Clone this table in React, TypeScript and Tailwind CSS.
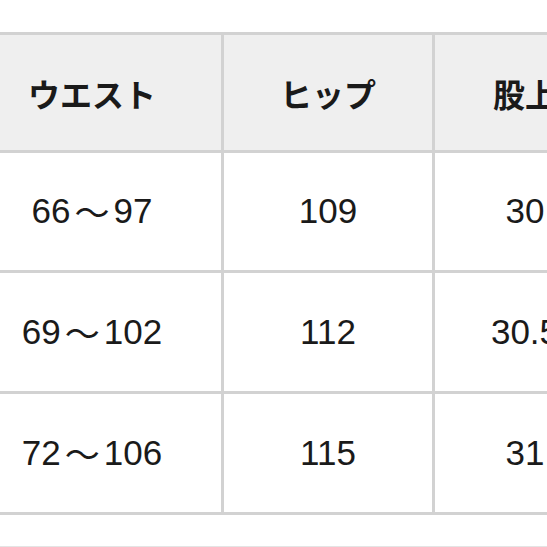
const headers = ["ウエスト", "ヒップ", "股上"];

const rows = [
  ["66～97", "109", "30"],
  ["69～102", "112", "30.5"],
  ["72～106", "115", "31"],
];

// column widths incl. the 3px right border
const colClass = ["w-[261px] shrink-0", "w-[211px] shrink-0", "w-[183px] shrink-0"];

function Cell({ text }: { text: string }) {
  const parts = text.split("～");
  if (parts.length < 2) return <>{text}</>;
  return (
    <>
      {parts[0]}
      <span className="mx-[4px]" style={{ fontFamily: '"Noto Sans CJK JP", sans-serif' }}>
        ～
      </span>
      {parts[1]}
    </>
  );
}

export default function App() {
  return (
    <div
      className="w-[547px] h-[547px] overflow-hidden bg-white pt-[32px] text-[#1a1a1a]"
      style={{ fontFamily: '"Liberation Sans", "Noto Sans CJK JP", sans-serif' }}
    >
      <div className="ml-[-37px] flex flex-col border-t-[3px] border-[#d2d2d2] w-max">
        {/* header */}
        <div className="flex h-[118px] bg-[#efefef] border-b-[3px] border-[#d2d2d2]">
          {headers.map((h, i) => (
            <div
              key={h}
              className={`${colClass[i]} flex items-center justify-center border-r-[3px] border-[#d2d2d2] text-[32px] font-bold`}
              style={{ fontFamily: '"Noto Sans CJK JP", sans-serif' }}
            >
              {h}
            </div>
          ))}
        </div>

        {rows.map((r, ri) => (
          <div
            key={ri}
            className={`flex ${ri === 0 ? "h-[120px]" : "h-[121px]"} bg-white border-b-[3px] border-[#d2d2d2]`}
          >
            {r.map((c, i) => (
              <div
                key={i}
                className={`${colClass[i]} flex items-center justify-center border-r-[3px] border-[#d2d2d2] text-[35px]`}
              >
                <Cell text={c} />
              </div>
            ))}
          </div>
        ))}
      </div>
      <div className="mt-[31px] h-px bg-[#e4e4e4]" />
    </div>
  );
}
